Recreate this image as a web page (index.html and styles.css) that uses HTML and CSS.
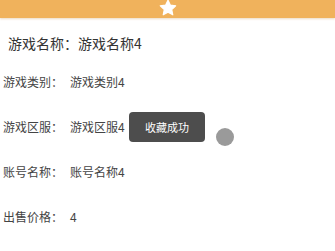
FILE: index.html
```html
<!DOCTYPE html>
<html>
<head>
<meta charset="utf-8">
<link rel="stylesheet" href="styles.css">
</head>
<body>
<div class="bar">
  <svg class="star" width="18" height="18" viewBox="0 0 24 24"><path d="M12 1.5l3.1 6.6 7.2.9-5.3 5 1.4 7.1L12 17.6l-6.4 3.5L7 14l-5.3-5 7.2-.9z" fill="#fff" stroke="#fff" stroke-width="1.5" stroke-linejoin="round"/></svg>
</div>
<div class="title">游戏名称：游戏名称4</div>
<div class="rows">
  <div class="row"><span class="label">游戏类别：</span><span class="val">游戏类别4</span></div>
  <div class="row"><span class="label">游戏区服：</span><span class="val">游戏区服4</span></div>
  <div class="row"><span class="label">账号名称：</span><span class="val">账号名称4</span></div>
  <div class="row"><span class="label">出售价格：</span><span class="val">4</span></div>
</div>
<div class="toast">收藏成功</div>
<div class="dot"></div>
</body>
</html>
```
FILE: styles.css
```css
html, body { margin: 0; padding: 0; background: #fff; }
body { width: 335px; height: 251px; overflow: hidden; position: relative; font-family: "Noto Sans CJK SC", "Liberation Sans", sans-serif; color: #333; }
.bar { height: 18px; background: #f0b25c; display: flex; justify-content: center; align-items: flex-start; box-shadow: 0 1px 2px rgba(200,150,80,0.35); }
.star { display: block; margin-top: -1px; }
.title { font-size: 14px; line-height: 20px; padding: 15px 0 0 8px; color: #333; }
.rows { padding-top: 20px; }
.row { display: flex; font-size: 12px; line-height: 18px; height: 45px; padding-left: 3px; color: #444; }
.label { width: 67px; }
.toast { position: absolute; left: 129px; top: 112px; width: 76px; height: 30px; border-radius: 4px; background: #4d4d4d; color: #fff; font-size: 11px; display: flex; align-items: center; justify-content: center; }
.dot { position: absolute; left: 216px; top: 128px; width: 18px; height: 18px; border-radius: 50%; background: #9a9a9a; }
```
